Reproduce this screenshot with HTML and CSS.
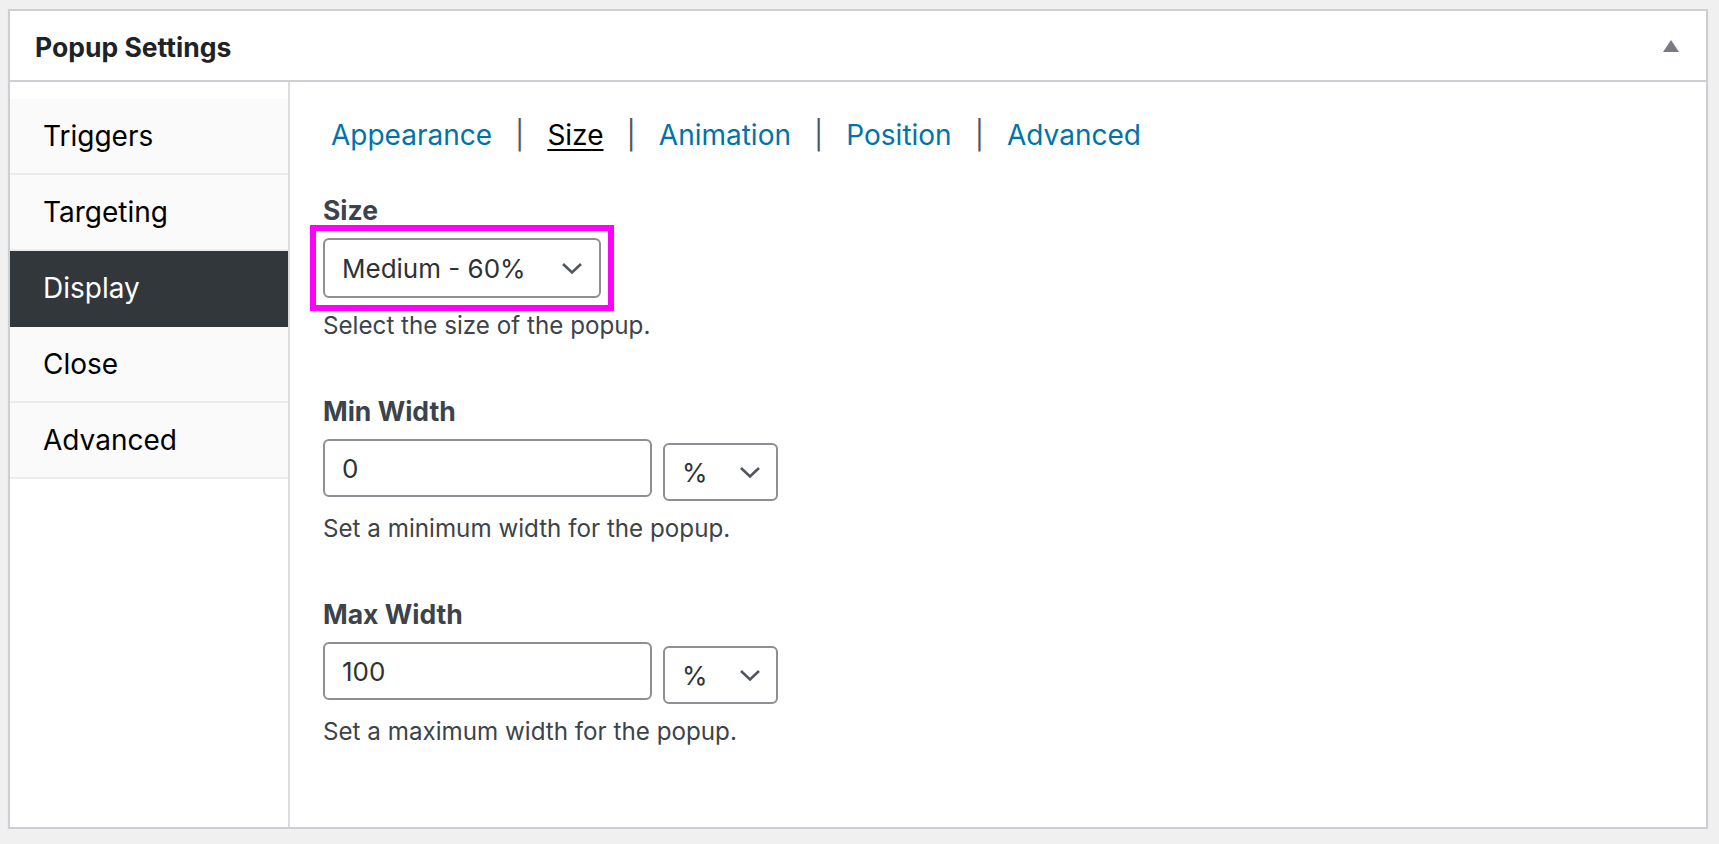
FILE: index.html
```html
<!DOCTYPE html>
<html lang="en">
<head>
<meta charset="utf-8">
<title>Popup Settings</title>
<link rel="stylesheet" href="styles.css">
</head>
<body>
<div class="postbox">
  <div class="postbox-header">
    <h2 class="postbox-title">Popup Settings</h2>
    <span class="toggle-arrow" aria-hidden="true"></span>
  </div>
  <div class="postbox-inside">
    <ul class="tabs">
      <li class="tab">Triggers</li>
      <li class="tab">Targeting</li>
      <li class="tab tab-active">Display</li>
      <li class="tab">Close</li>
      <li class="tab">Advanced</li>
    </ul>
    <div class="panel">
      <nav class="subtabs">
        <a class="subtab" href="#">Appearance</a>
        <span class="subtab-sep">|</span>
        <a class="subtab subtab-current" href="#">Size</a>
        <span class="subtab-sep">|</span>
        <a class="subtab" href="#">Animation</a>
        <span class="subtab-sep">|</span>
        <a class="subtab" href="#">Position</a>
        <span class="subtab-sep">|</span>
        <a class="subtab" href="#">Advanced</a>
      </nav>

      <div class="field field-first">
        <div class="field-label">Size</div>
        <div class="highlight">
          <div class="select select-size">
            <span class="select-value">Medium - 60%</span>
            <svg class="chevron" width="22" height="13" viewBox="0 0 22 13"><polyline points="2,2 11,10.5 20,2" fill="none" stroke="#50575e" stroke-width="2.6"/></svg>
          </div>
        </div>
        <p class="field-help">Select the size of the popup.</p>
      </div>

      <div class="field">
        <div class="field-label">Min Width</div>
        <div class="field-row">
          <div class="text-input">0</div>
          <div class="select select-unit">
            <span class="select-value">%</span>
            <svg class="chevron" width="22" height="13" viewBox="0 0 22 13"><polyline points="2,2 11,10.5 20,2" fill="none" stroke="#50575e" stroke-width="2.6"/></svg>
          </div>
        </div>
        <p class="field-help">Set a minimum width for the popup.</p>
      </div>

      <div class="field">
        <div class="field-label">Max Width</div>
        <div class="field-row">
          <div class="text-input">100</div>
          <div class="select select-unit">
            <span class="select-value">%</span>
            <svg class="chevron" width="22" height="13" viewBox="0 0 22 13"><polyline points="2,2 11,10.5 20,2" fill="none" stroke="#50575e" stroke-width="2.6"/></svg>
          </div>
        </div>
        <p class="field-help">Set a maximum width for the popup.</p>
      </div>
    </div>
  </div>
</div>
</body>
</html>
```
FILE: styles.css
```css
* {
  box-sizing: border-box;
}

html,
body {
  margin: 0;
  padding: 0;
}

body {
  background: #f0f0f1;
  font-family: Inter, "Liberation Sans", sans-serif;
  color: #3c434a;
}

.postbox {
  width: 1700px;
  height: 820px;
  margin: 9px 0 0 8px;
  background: #fff;
  border: 2px solid #ccd0d4;
  box-shadow: 0 2px 2px rgba(0, 0, 0, 0.05);
  display: flex;
  flex-direction: column;
}

/* header bar with title and collapse arrow */
.postbox-header {
  height: 71px;
  flex: none;
  border-bottom: 2px solid #ccd0d4;
  display: flex;
  align-items: center;
  justify-content: space-between;
  padding: 4px 27px 0 25px;
}

.postbox-title {
  margin: 0;
  font-size: 26.5px;
  font-weight: 700;
  color: #1d2327;
  line-height: 1;
}

.toggle-arrow {
  width: 0;
  height: 0;
  margin-top: -4px;
  border-left: 8px solid transparent;
  border-right: 8px solid transparent;
  border-bottom: 12px solid #787c82;
}

.postbox-inside {
  flex: 1;
  display: flex;
}

/* vertical tab list */
.tabs {
  width: 280px;
  flex: none;
  margin: 0;
  padding: 17px 0 0;
  list-style: none;
  border-right: 2px solid #dcdcde;
}

.tab {
  height: 76px;
  display: flex;
  align-items: center;
  padding-left: 33px;
  background: #fafafa;
  border-bottom: 2px solid #ececec;
  font-size: 28px;
  color: #000;
}

.tab-active {
  background: #32373c;
  color: #fff;
  border-bottom-color: #32373c;
}

/* settings panel */
.panel {
  flex: 1;
  padding: 33px 33px 0;
}

.subtabs {
  display: flex;
  align-items: center;
  gap: 23px;
  padding-left: 8px;
  height: 40px;
  font-size: 28px;
}

.subtab {
  color: #0073aa;
  text-decoration: none;
}

.subtab-current {
  color: #000;
  text-decoration: underline;
  text-underline-offset: 4px;
  text-decoration-thickness: 2px;
}

.subtab-sep {
  color: #50575e;
}

.field {
  margin-top: 51px;
}

.field-first {
  margin-top: 38px;
}

.field-label {
  font-size: 26.5px;
  font-weight: 700;
  line-height: 34px;
  color: #3c434a;
  margin-bottom: 11px;
}

.highlight {
  display: inline-block;
  outline: 6px solid #ff00ff;
  outline-offset: 7px;
}

.select {
  display: flex;
  align-items: center;
  justify-content: space-between;
  height: 60px;
  border: 2px solid #8c8f94;
  border-radius: 6px;
  padding: 0 16px 0 17px;
  font-size: 26px;
  color: #2c3338;
  background: #fff;
}

.select-size {
  width: 278px;
}

.chevron {
  display: block;
}

.field-row {
  display: flex;
  align-items: flex-start;
  gap: 11px;
}

.text-input {
  width: 329px;
  height: 58px;
  border: 2px solid #8c8f94;
  border-radius: 6px;
  padding: 0 17px;
  display: flex;
  align-items: center;
  font-size: 26px;
  color: #2c3338;
}

.select-unit {
  width: 115px;
  height: 58px;
  margin-top: 4px;
  padding: 0 15px 0 17px;
}

.field-help {
  margin: 11px 0 0;
  font-size: 24.2px;
  line-height: 34px;
  color: #3c434a;
}
```
